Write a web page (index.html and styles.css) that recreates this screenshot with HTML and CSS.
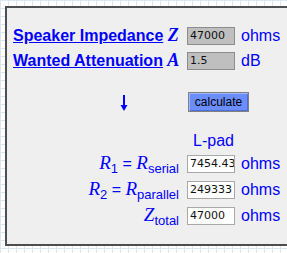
FILE: index.html
```html
<!DOCTYPE html>
<html lang="en">

<head>
    <meta charset="UTF-8">
    <title>L-pad</title>
    <link rel="stylesheet" href="styles.css">
</head>

<body>
    <div class="panel">
        <div class="row row1">
            <div class="label"><a href="#">Speaker Impedance</a> <var>Z</var></div>
            <input class="field in" type="text" value="47000">
            <div class="unit">ohms</div>
        </div>
        <div class="row row2">
            <div class="label"><a href="#">Wanted Attenuation</a> <var>A</var></div>
            <input class="field in" type="text" value="1.5">
            <div class="unit">dB</div>
        </div>
        <div class="row row3">
            <div class="label">
                <svg class="arrow" width="8" height="16" viewBox="0 0 8 16">
                    <rect x="3" y="0" width="2" height="11" fill="#0000ff"/>
                    <polygon points="0.5,10 7.5,10 4,16" fill="#0000ff"/>
                </svg>
            </div>
            <button class="calc">calculate</button>
        </div>
        <div class="row row4">
            <div class="label"></div>
            <div class="title">L-pad</div>
        </div>
        <div class="row row5">
            <div class="label right"><var class="sym">R</var><sub>1</sub> = <var class="sym">R</var><sub>serial</sub></div>
            <input class="field out" type="text" value="7454.43">
            <div class="unit">ohms</div>
        </div>
        <div class="row row6">
            <div class="label right"><var class="sym">R</var><sub>2</sub> = <var class="sym">R</var><sub>parallel</sub></div>
            <input class="field out" type="text" value="249333">
            <div class="unit">ohms</div>
        </div>
        <div class="row row7">
            <div class="label right"><var class="sym">Z</var><sub>total</sub></div>
            <input class="field out" type="text" value="47000">
            <div class="unit">ohms</div>
        </div>
    </div>
</body>

</html>
```

FILE: styles.css
```css
body {
    margin: 0;
    padding: 6px 0 0 5px;
    height: 253px;
    box-sizing: border-box;
    overflow: hidden;
    font-family: "Liberation Sans", Arial, sans-serif;
    font-size: 16px;
    color: #0000ff;
    background-color: #ffffff;
    background-image:
        linear-gradient(to right, #dce8f1 1px, transparent 1px),
        linear-gradient(to bottom, #dce8f1 1px, transparent 1px);
    background-size: 8px 8px;
}

.panel {
    width: 282px;
    height: 240px;
    box-sizing: border-box;
    border: 2px solid #4e4e4e;
    border-right: none;
    background: #efefef;
    padding: 18px 0 0 6px;
    overflow: hidden;
}

.row {
    display: grid;
    grid-template-columns: 174px 48px auto;
    align-items: center;
    height: 18px;
    line-height: 18px;
}

.row2 { margin-top: 7px; }
.row3 { margin-top: 23px; height: 20px; }
.row4 { margin-top: 20px; }
.row5 { margin-top: 4px; }
.row6 { margin-top: 8px; }
.row7 { margin-top: 8px; }

.label {
    white-space: nowrap;
}

.label a {
    color: #0000ff;
    font-weight: bold;
    text-decoration: underline;
}

.label.right {
    text-align: right;
    padding-right: 8px;
}

var {
    font-family: "Liberation Serif", "Times New Roman", serif;
    font-style: italic;
    font-weight: bold;
    font-size: 18px;
}

var.sym {
    font-weight: normal;
    font-size: 19px;
}

sub {
    font-size: 13px;
    line-height: 0;
    vertical-align: -4px;
}

.field {
    width: 48px;
    height: 18px;
    box-sizing: border-box;
    margin: 0;
    padding: 0 0 0 2px;
    font-family: "DejaVu Sans", Verdana, sans-serif;
    font-size: 11px;
    color: #111;
    outline: none;
}

.field.in {
    background: #bfbfbf;
    border: 1px solid #8c8c8c;
}

.field.out {
    background: #ffffff;
    border: 1px solid #a8a8a8;
}

.unit {
    padding-left: 6px;
}

.arrow {
    display: block;
    margin: 1px 0 0 107px;
}

.calc {
    grid-column: 2 / 4;
    width: 61px;
    height: 20px;
    margin: 0 0 0 1px;
    padding: 0;
    background: #6b8dff;
    border: 1px solid #808080;
    box-shadow: inset 1px 1px 0 #9fb5ff, inset -1px -1px 0 #4f6fd8;
    font-family: "Liberation Sans", Arial, sans-serif;
    font-size: 12px;
    color: #000;
}

.title {
    grid-column: 2 / 4;
    padding-left: 6px;
}
```
